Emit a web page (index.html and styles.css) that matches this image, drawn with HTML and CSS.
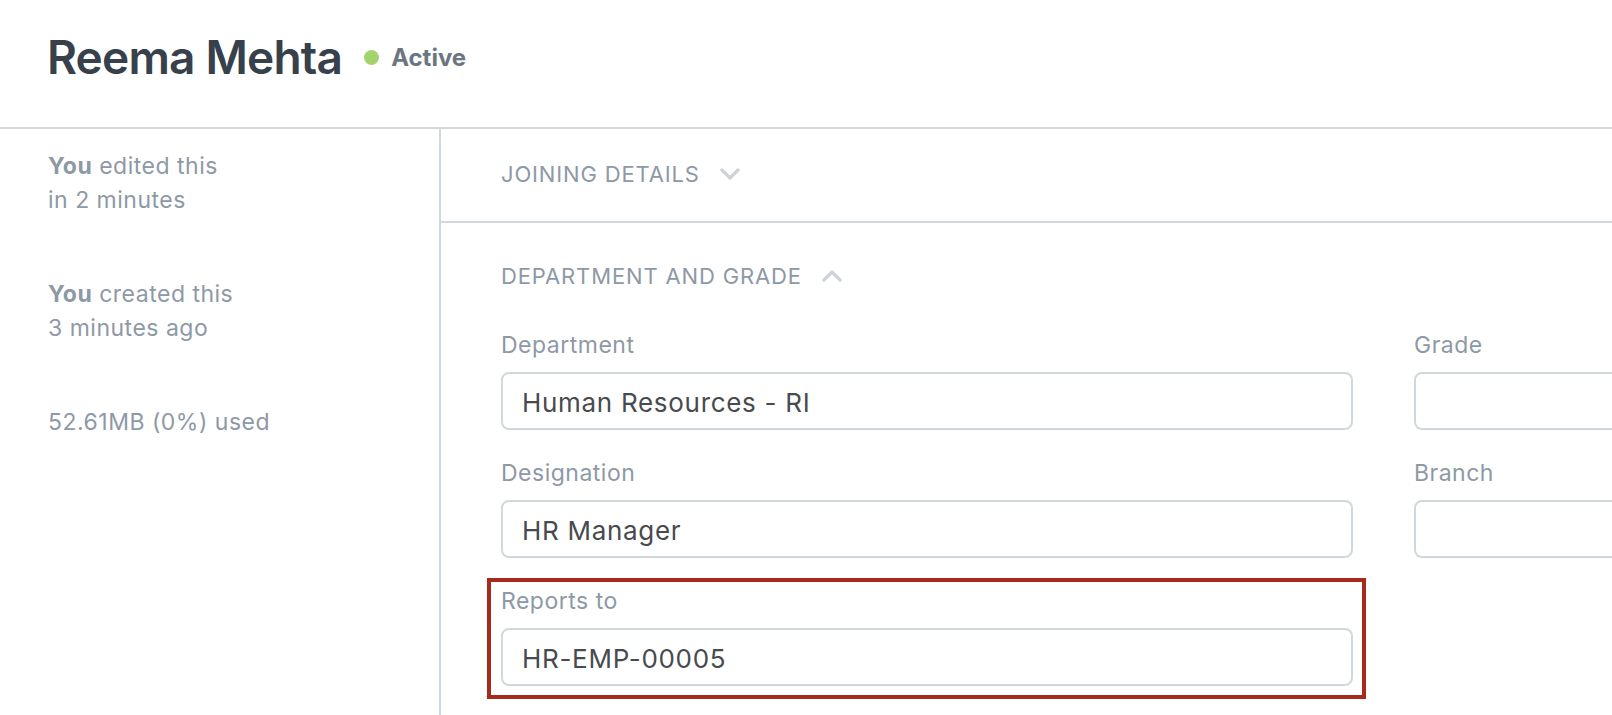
FILE: index.html
```html
<!DOCTYPE html>
<html lang="en">
<head>
<meta charset="utf-8">
<title>Reema Mehta</title>
<link rel="stylesheet" href="styles.css">
</head>
<body>
<div class="page">
  <header class="page-head">
    <h1 class="title">Reema Mehta</h1>
    <span class="indicator"><span class="dot"></span>Active</span>
  </header>
  <div class="layout">
    <aside class="sidebar">
      <p class="meta"><b>You</b> edited this<br>in 2 minutes</p>
      <p class="meta"><b>You</b> created this<br>3 minutes ago</p>
      <p class="meta">52.61MB (0%) used</p>
    </aside>
    <main class="main">
      <section class="section collapsed">
        <div class="section-head">
          <span class="section-title">Joining Details</span>
          <svg class="chev" width="20" height="12" viewBox="0 0 20 12"><polyline points="2,2 10,10 18,2" fill="none" stroke="#cdd3d8" stroke-width="3.2" stroke-linecap="round" stroke-linejoin="round"/></svg>
        </div>
      </section>
      <section class="section open">
        <div class="section-head">
          <span class="section-title">Department and Grade</span>
          <svg class="chev" width="20" height="12" viewBox="0 0 20 12"><polyline points="2,10 10,2 18,10" fill="none" stroke="#cdd3d8" stroke-width="3.2" stroke-linecap="round" stroke-linejoin="round"/></svg>
        </div>
        <div class="form-grid">
          <div class="column">
            <div class="field">
              <div class="label">Department</div>
              <div class="control">Human Resources - RI</div>
            </div>
            <div class="field">
              <div class="label">Designation</div>
              <div class="control">HR Manager</div>
            </div>
            <div class="field highlighted">
              <div class="label">Reports to</div>
              <div class="control">HR-EMP-00005</div>
            </div>
          </div>
          <div class="column">
            <div class="field">
              <div class="label">Grade</div>
              <div class="control"></div>
            </div>
            <div class="field">
              <div class="label">Branch</div>
              <div class="control"></div>
            </div>
          </div>
        </div>
      </section>
    </main>
  </div>
</div>
</body>
</html>
```
FILE: styles.css
```css
* { box-sizing: border-box; }
html, body {
  margin: 0;
  padding: 0;
  background: #fff;
  overflow: hidden;
}
body {
  font-family: Inter, "Noto Sans", "Liberation Sans", sans-serif;
  color: #36414c;
}
.page {
  height: 715px;
  display: flex;
  flex-direction: column;
  width: 1612px;
  overflow: hidden;
}
.page-head {
  height: 129px;
  flex: none;
  border-bottom: 2px solid #d1d8dd;
  display: flex;
  align-items: center;
  padding: 0 0 12px 47px;
}
.title {
  margin: 0;
  font-size: 46px;
  line-height: 55px;
  font-weight: 600;
  color: #36414c;
  letter-spacing: -0.8px;
}
.indicator {
  display: flex;
  align-items: center;
  margin-left: 22px;
  font-size: 24px;
  line-height: 28px;
  font-weight: 700;
  color: #6c7680;
}
.dot {
  width: 15px;
  height: 15px;
  border-radius: 50%;
  background: #a2d46a;
  margin-right: 12px;
}
.layout {
  flex: 1;
  display: flex;
  min-height: 0;
}
.sidebar {
  width: 441px;
  flex: none;
  border-right: 2px solid #d1d8dd;
  padding: 20px 0 0 48px;
}
.meta {
  margin: 0 0 60px;
  font-size: 23px;
  line-height: 34px;
  letter-spacing: 0.5px;
  color: #8d99a6;
}
.meta b { font-weight: 700; }
.main {
  flex: 1;
  min-width: 0;
  overflow: hidden;
}
.section { padding: 0 60px; }
.section.collapsed {
  padding-top: 30px;
  padding-bottom: 32px;
  border-bottom: 2px solid #d1d8dd;
}
.section.open { padding-top: 38px; }
.section-head {
  display: flex;
  align-items: center;
  height: 30px;
}
.section-title {
  font-size: 22px;
  line-height: 30px;
  text-transform: uppercase;
  letter-spacing: 0.85px;
  color: #8d99a6;
}
.chev { margin-left: 20px; flex: none; }
.form-grid {
  display: grid;
  grid-template-columns: 852px 852px;
  column-gap: 61px;
  margin-top: 39px;
}
.field {
  position: relative;
  margin-bottom: 28px;
}
.label {
  font-size: 23px;
  line-height: 30px;
  letter-spacing: 0.5px;
  color: #8d99a6;
  margin-bottom: 12px;
}
.control {
  height: 58px;
  border: 2px solid #d1d8dd;
  border-radius: 8px;
  display: flex;
  align-items: center;
  padding: 2px 19px 0;
  font-size: 26px;
  letter-spacing: 0.7px;
  color: #474b4f;
}
.highlighted::after {
  content: "";
  position: absolute;
  top: -8px;
  left: -14px;
  right: -13px;
  bottom: -13px;
  border: 4px solid #a62b1c;
  pointer-events: none;
}
```
